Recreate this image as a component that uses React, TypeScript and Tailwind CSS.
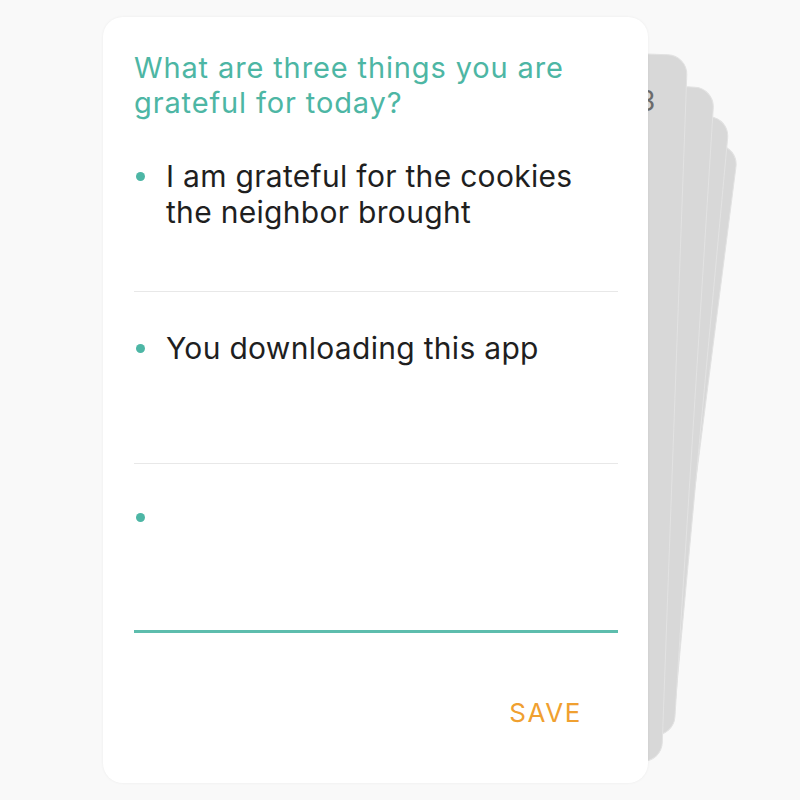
const FONT = { fontFamily: "Inter, 'Noto Sans', sans-serif" };

const entries = [
  "I am grateful for the cookies the neighbor brought",
  "You downloading this app",
  "",
];

function Entry({ text, active }: { text: string; active?: boolean }) {
  return (
    <div
      className={
        active
          ? "flex pt-[35px] pb-[23px] border-b-[3px] border-[#5dbdad]"
          : "flex pt-[38px] pb-[25px] border-b border-[#e8e8e8]"
      }
    >
      <div className="w-[32px] shrink-0 h-[36px] flex items-center">
        <span className="ml-[2px] w-[9px] h-[9px] rounded-full bg-[#4db6a5]" />
      </div>
      <p className="min-h-[108px] text-[30px] leading-[36px] tracking-[0.01em] text-[#1f1f1f]">{text}</p>
    </div>
  );
}

export default function App() {
  return (
    <div className="min-h-[800px] bg-[#f9f9f9] pt-[17px] pl-[103px] overflow-hidden" style={FONT}>
      <div className="relative w-[545px] h-[766px]">
        {/* stacked cards behind */}
        <div className="absolute right-0 top-0 w-[545px] h-[590px] rounded-[20px] bg-[#d8d8d8] border border-[#e2e2e2] origin-top-right translate-x-[91px] translate-y-[130px] rotate-[7.3deg]" />
        <div className="absolute right-0 top-0 w-[545px] h-[617px] rounded-[20px] bg-[#d8d8d8] border border-[#e2e2e2] origin-top-right translate-x-[82px] translate-y-[101px] rotate-[5.3deg]" />
        <div className="absolute right-0 top-0 w-[545px] h-[650px] rounded-[20px] bg-[#d8d8d8] border border-[#e2e2e2] origin-top-right translate-x-[67px] translate-y-[71px] rotate-[3.6deg]" />
        <div className="absolute right-0 top-0 w-[545px] h-[708px] rounded-[20px] bg-[#d8d8d8] border border-[#e2e2e2] origin-top-right translate-x-[40px] translate-y-[38px] rotate-[2.1deg]">
          <span className="absolute right-[30px] top-[28px] text-[28px] leading-[36px] text-[#6b6b6b]">3</span>
        </div>

        {/* front card */}
        <div className="relative z-10 w-[545px] h-[766px] rounded-[20px] bg-white shadow-[0_0_3px_rgba(0,0,0,0.06)] flex flex-col pl-[31px] pr-[30px] pt-[33px]">
          <h1 className="text-[29px] leading-[35px] tracking-[0.03em] text-[#4db6a4] font-normal">
            What are three things you are grateful for today?
          </h1>
          {entries.map((t, i) => (
            <Entry key={i} text={t} active={i === entries.length - 1} />
          ))}
          <div className="flex justify-end pr-[36px] mt-[68px]">
            <button className="text-[26px] leading-[24px] tracking-[0.06em] text-[#f0a030]">SAVE</button>
          </div>
        </div>
      </div>
    </div>
  );
}
